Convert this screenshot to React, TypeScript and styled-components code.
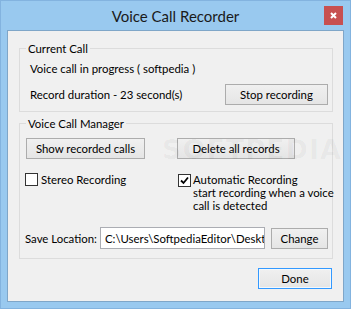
import React from "react";
import styled, { createGlobalStyle } from "styled-components";

const FONT = 11.4;

const GlobalStyle = createGlobalStyle`
  html, body { margin: 0; padding: 0; }
  body {
    font-family: Lato, "Liberation Sans", sans-serif;
    font-size: ${FONT}px;
    color: #000;
  }
  * { box-sizing: border-box; }
`;

const Window = styled.div`
  width: 351px;
  height: 309px;
  background: #99c9ef;
  border: 1px solid #83b3df;
  display: flex;
  flex-direction: column;
  padding: 0 6px 6px 6px;
  position: relative;
  overflow: hidden;
`;

const TitleBar = styled.div`
  height: 29px;
  display: grid;
  grid-template-columns: 1fr auto 1fr;
  align-items: start;
`;

const Title = styled.div`
  grid-column: 2;
  font-size: 15px;
  line-height: 20px;
  padding-top: 5px;
  color: #1a1a1a;
`;

const CloseButton = styled.div`
  grid-column: 3;
  justify-self: end;
  margin-top: 5px;
  margin-right: 1px;
  width: 19px;
  height: 19px;
  background: #c75050;
  display: flex;
  align-items: center;
  justify-content: center;
`;

const Client = styled.div`
  flex: 1;
  min-height: 0;
  background: #f0f0f0;
  border: 1px solid #7fa6c8;
  padding: 10px 10px 0 11px;
  display: flex;
  flex-direction: column;
  position: relative;
`;

const Group = styled.fieldset<{ $gap?: number }>`
  margin: ${(p) => p.$gap ?? 0}px 0 0 0;
  padding: 0;
  border: 1px solid #dcdcdc;
  min-inline-size: 0;
`;

const Legend = styled.legend`
  margin-left: 6px;
  padding: 0 2px;
  font-size: ${FONT}px;
  line-height: 15px;
`;

const CallBody = styled.div`
  padding: 5px 4px 6px 10px;
  display: flex;
  flex-direction: column;
`;

const Line = styled.div`
  line-height: 16px;
  height: 16px;
  white-space: nowrap;
`;

const DurationRow = styled.div`
  margin-top: 7px;
  display: flex;
  align-items: center;
  justify-content: space-between;
  white-space: nowrap;
`;

const Button = styled.button<{ $w: number; $default?: boolean }>`
  width: ${(p) => p.$w}px;
  height: 21px;
  padding: 0;
  font-family: inherit;
  font-size: ${FONT}px;
  color: #000;
  white-space: nowrap;
  background: linear-gradient(#f0f0f0, #e5e5e5);
  border: 1px solid ${(p) => (p.$default ? "#3399ff" : "#acacac")};
  border-radius: 0;
  box-shadow: ${(p) => (p.$default ? "inset 0 0 0 1px #f2f8fd" : "none")};
  line-height: 19px;
`;

const ManagerBody = styled.div`
  padding: 7px 4px 9px 5px;
  display: grid;
  grid-template-columns: 152px 1fr;
  row-gap: 14px;
`;

const CheckRow = styled.label<{ $shift?: number; $gap: number }>`
  display: flex;
  align-items: flex-start;
  line-height: 13px;
  gap: ${(p) => p.$gap}px;
  margin-left: ${(p) => p.$shift ?? 0}px;
  white-space: nowrap;
`;

const Box = styled.span<{ $checked?: boolean }>`
  width: 13px;
  height: 13px;
  flex: none;
  border: 1px solid #333;
  background: #fff;
  display: flex;
  align-items: center;
  justify-content: center;
  margin-top: ${(p) => (p.$checked ? 1 : 0)}px;
`;

const SaveRow = styled.div`
  grid-column: 1 / span 2;
  margin-top: 1px;
  display: flex;
  align-items: center;
`;

const SaveLabel = styled.span`
  width: 75px;
  flex: none;
  white-space: nowrap;
`;

const PathBox = styled.input`
  width: 165px;
  height: 22px;
  flex: none;
  border: 1px solid #abadb3;
  background: #fff;
  font-family: inherit;
  font-size: ${FONT}px;
  color: #000;
  padding: 0 0 0 4px;
  margin-right: 6px;
  outline: none;
`;

const Footer = styled.div`
  margin-top: 9px;
  padding-right: 1px;
  display: flex;
  justify-content: flex-end;
`;

const Watermark = styled.div`
  position: absolute;
  left: 154px;
  top: 103px;
  font-family: "DejaVu Sans", sans-serif;
  font-size: 27px;
  font-weight: bold;
  letter-spacing: 1px;
  color: rgba(0, 0, 0, 0.035);
  pointer-events: none;
`;

const Check = () => (
  <svg width="9" height="9" viewBox="0 0 9 9">
    <path d="M1 4.5 L3.5 7 L8 1.5" fill="none" stroke="#000" strokeWidth="1.8" />
  </svg>
);

export default function App() {
  return (
    <>
      <GlobalStyle />
      <Window>
        <TitleBar>
          <Title>Voice Call Recorder</Title>
          <CloseButton>
            <svg width="7" height="7" viewBox="0 0 7 7">
              <path d="M1 1 L6 6 M6 1 L1 6" stroke="#fff" strokeWidth="2" />
            </svg>
          </CloseButton>
        </TitleBar>
        <Client>
          <Watermark>SOFTPEDIA</Watermark>
          <Group>
            <Legend>Current Call</Legend>
            <CallBody>
              <Line>Voice call in progress ( softpedia )</Line>
              <DurationRow>
                <span>Record duration - 23 second(s)</span>
                <Button $w={103}>Stop recording</Button>
              </DurationRow>
            </CallBody>
          </Group>
          <Group $gap={4}>
            <Legend>Voice Call Manager</Legend>
            <ManagerBody>
              <div>
                <Button $w={119} style={{ marginLeft: 1 }}>
                  Show recorded calls
                </Button>
              </div>
              <div>
                <Button $w={118}>Delete all records</Button>
              </div>
              <CheckRow $gap={3}>
                <Box />
                <span>Stereo Recording</span>
              </CheckRow>
              <CheckRow $gap={2} $shift={1}>
                <Box $checked>
                  <Check />
                </Box>
                <span>
                  Automatic Recording
                  <br />
                  start recording when a voice
                  <br />
                  call is detected
                </span>
              </CheckRow>
              <SaveRow>
                <SaveLabel>Save Location:</SaveLabel>
                <PathBox readOnly value="C:\Users\SoftpediaEditor\Desktop\Voice Call Recorder" />
                <Button $w={57}>Change</Button>
              </SaveRow>
            </ManagerBody>
          </Group>
          <Footer>
            <Button $w={74} $default>
              Done
            </Button>
          </Footer>
        </Client>
      </Window>
    </>
  );
}
